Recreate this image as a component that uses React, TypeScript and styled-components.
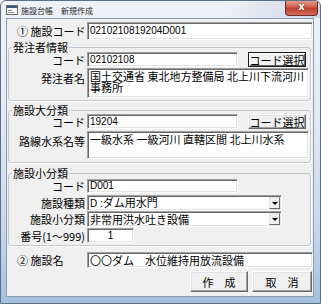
import * as React from "react";
import styled, { createGlobalStyle } from "styled-components";

const font = `"Noto Sans CJK JP", "Noto Sans CJK SC", sans-serif`;
const codeFont = `"Liberation Sans", "Noto Sans CJK JP", sans-serif`;

const GlobalStyle = createGlobalStyle`
  html, body {
    margin: 0;
    padding: 0;
    background: #ffffff;
  }
`;

const Window = styled.div`
  width: 321px;
  height: 304px;
  box-sizing: border-box;
  border: 1px solid #5d7089;
  border-radius: 6px 6px 0 0;
  background: linear-gradient(
    180deg,
    #eef2f7 0%,
    #e4ebf3 35%,
    #c8d8ec 75%,
    #a6bfe0 100%
  );
  display: flex;
  flex-direction: column;
  font-family: ${font};
  font-size: 11px;
  color: #000;
  overflow: hidden;
`;

const TitleBar = styled.div`
  height: 17px;
  display: flex;
  align-items: flex-start;
  padding-left: 5px;
  background: linear-gradient(90deg, transparent 70%, rgba(120, 140, 170, 0.25) 100%);
`;

const TitleIcon = styled.svg`
  margin-top: 4px;
  flex: none;
`;

const TitleText = styled.span`
  font-size: 8px;
  line-height: 9px;
  margin-top: 5px;
  margin-left: 3px;
  color: #1e1e1e;
  white-space: pre;
`;

const CloseButton = styled.div`
  margin-left: auto;
  margin-right: 2px;
  margin-top: -1px;
  width: 33px;
  height: 16px;
  box-sizing: border-box;
  border: 1px solid #6e2c28;
  border-top: none;
  border-radius: 0 0 4px 4px;
  background: linear-gradient(180deg, #e8a898 0%, #d0614f 45%, #c13b2c 55%, #d0705a 100%);
  color: #fff;
  font-family: "DejaVu Sans", sans-serif;
  font-weight: bold;
  font-size: 10px;
  line-height: 14px;
  text-align: center;
  text-shadow: 0 0 2px #5a1a14;
`;

const Client = styled.div`
  flex: 1;
  margin: 0 6px 6px 5px;
  border: 1px solid #8a9bb2;
  background: #f0f0f0;
  display: flex;
  flex-direction: column;
`;

const TopRow = styled.div<{ $mt: number; $h: number }>`
  display: flex;
  align-items: center;
  margin-top: ${p => p.$mt}px;
  height: ${p => p.$h}px;
`;

const TopLabel = styled.span`
  width: 80px;
  box-sizing: border-box;
  padding-left: 10px;
  font-size: 11px;
  line-height: 12px;
  white-space: nowrap;
`;

const Group = styled.fieldset<{ $mt: number; $pb: number }>`
  margin: ${p => p.$mt}px 2px 0 1px;
  padding: 0 0 ${p => p.$pb}px 0;
  border: 1px solid #c4c8ce;
  border-radius: 3px;
  box-shadow: 1px 1px 0 #ffffff;
  min-inline-size: 0;
`;

const Legend = styled.legend`
  margin-left: 3px;
  padding: 0 1px;
  font-size: 11px;
  line-height: 10px;
`;

const FormRow = styled.div<{ $mt: number; $h: number; $top?: boolean }>`
  display: flex;
  align-items: ${p => (p.$top ? "flex-start" : "center")};
  margin-top: ${p => p.$mt}px;
  height: ${p => p.$h}px;
`;

const Label = styled.span<{ $top?: boolean }>`
  width: 78px;
  flex: none;
  box-sizing: border-box;
  padding-right: 2px;
  padding-top: ${p => (p.$top ? 4 : 0)}px;
  text-align: right;
  line-height: 12px;
  white-space: nowrap;
`;

const Field = styled.div<{ $w?: number; $mr?: number; $center?: boolean; $code?: boolean }>`
  box-sizing: border-box;
  height: 100%;
  width: ${p => (p.$w ? `${p.$w}px` : "auto")};
  flex: ${p => (p.$w ? "none" : "1")};
  margin-right: ${p => p.$mr ?? 0}px;
  background: #fff;
  border-style: solid;
  border-width: 1px;
  border-color: #a0a0a0 #ffffff #ffffff #a0a0a0;
  box-shadow: inset 1px 1px 0 #696969, inset -1px -1px 0 #e3e3e3;
  padding: 0 2px;
  display: flex;
  align-items: center;
  justify-content: ${p => (p.$center ? "center" : "flex-start")};
  font-family: ${p => (p.$code ? codeFont : font)};
  font-size: ${p => (p.$code ? 10 : 11)}px;
  line-height: 12px;
  white-space: nowrap;
  overflow: hidden;
`;

const TextBox = styled.div<{ $mr: number }>`
  box-sizing: border-box;
  height: 100%;
  flex: 1;
  margin-right: ${p => p.$mr}px;
  background: #fff;
  border-style: solid;
  border-width: 1px;
  border-color: #a0a0a0 #ffffff #ffffff #a0a0a0;
  box-shadow: inset 1px 1px 0 #696969, inset -1px -1px 0 #e3e3e3;
  padding: 2px 2px 0 2px;
  line-height: 11px;
  overflow: hidden;
`;

const Button = styled.div<{ $w: number; $h: number; $default?: boolean }>`
  box-sizing: border-box;
  width: ${p => p.$w}px;
  height: ${p => p.$h}px;
  flex: none;
  background: #f0f0f0;
  border-style: solid;
  border-width: 1px;
  border-color: ${p =>
    p.$default ? "#1a1a1a" : "#ffffff #696969 #696969 #ffffff"};
  box-shadow: ${p =>
    p.$default
      ? "inset 1px 1px 0 #fff, inset -1px -1px 0 #696969"
      : "inset -1px -1px 0 #a0a0a0, inset 1px 1px 0 #e3e3e3"};
  display: flex;
  align-items: center;
  justify-content: center;
  line-height: 12px;
  white-space: pre;
`;

const Select = styled.div<{ $w: number }>`
  box-sizing: border-box;
  height: 100%;
  width: ${p => p.$w}px;
  flex: none;
  background: #fff;
  border-style: solid;
  border-width: 1px;
  border-color: #a0a0a0 #ffffff #ffffff #a0a0a0;
  box-shadow: inset 1px 1px 0 #696969, inset -1px -1px 0 #e3e3e3;
  padding: 1px 1px 1px 2px;
  display: flex;
  align-items: center;
`;

const SelectText = styled.span`
  flex: 1;
  white-space: nowrap;
  line-height: 12px;
`;

const CodePart = styled.span`
  font-family: ${codeFont};
  font-size: 10px;
`;

const DropButton = styled.span`
  box-sizing: border-box;
  width: 11px;
  height: 100%;
  flex: none;
  background: #f0f0f0;
  border-style: solid;
  border-width: 1px;
  border-color: #e3e3e3 #696969 #696969 #e3e3e3;
  display: flex;
  align-items: center;
  justify-content: center;
  &::after {
    content: "";
    border-left: 3px solid transparent;
    border-right: 3px solid transparent;
    border-top: 3px solid #000;
  }
`;

const ButtonRow = styled.div`
  display: flex;
  justify-content: flex-end;
  gap: 4px;
  margin-top: 3px;
  margin-right: 1px;
`;

export default function App() {
  return (
    <>
      <GlobalStyle />
      <Window>
        <TitleBar>
          <TitleIcon width="12" height="10" viewBox="0 0 12 10">
            <rect x="0.5" y="0.5" width="11" height="9" fill="#fbfbfb" stroke="#6b6b6b" />
            <rect x="1" y="1" width="10" height="2" fill="#3d5a85" />
            <rect x="2" y="5" width="4" height="1" fill="#8a8a8a" />
            <rect x="2" y="7" width="6" height="1" fill="#8a8a8a" />
          </TitleIcon>
          <TitleText>施設台帳　新規作成</TitleText>
          <CloseButton>x</CloseButton>
        </TitleBar>
        <Client>
          <TopRow $mt={3} $h={18}>
            <TopLabel>① 施設コード</TopLabel>
            <Field $code>0210210819204D001</Field>
          </TopRow>

          <Group $mt={2} $pb={2}>
            <Legend>発注者情報</Legend>
            <FormRow $mt={0} $h={15}>
              <Label>コード</Label>
              <Field $w={151} $mr={10} $code>02102108</Field>
              <Button $w={58} $h={15} $default>コード選択</Button>
            </FormRow>
            <FormRow $mt={1} $h={30} $top>
              <Label $top>発注者名</Label>
              <TextBox $mr={1}>国土交通省 東北地方整備局 北上川下流河川事務所</TextBox>
            </FormRow>
          </Group>

          <Group $mt={4} $pb={3}>
            <Legend>施設大分類</Legend>
            <FormRow $mt={-1} $h={15}>
              <Label>コード</Label>
              <Field $w={151} $mr={10} $code>19204</Field>
              <Button $w={58} $h={15}>コード選択</Button>
            </FormRow>
            <FormRow $mt={2} $h={28} $top>
              <Label $top>路線水系名等</Label>
              <TextBox $mr={1}>一級水系 一級河川 直轄区間 北上川水系</TextBox>
            </FormRow>
          </Group>

          <Group $mt={5} $pb={2}>
            <Legend>施設小分類</Legend>
            <FormRow $mt={1} $h={14}>
              <Label>コード</Label>
              <Field $w={151} $code>D001</Field>
            </FormRow>
            <FormRow $mt={2} $h={16}>
              <Label>施設種類</Label>
              <Select $w={195}>
                <SelectText>
                  <CodePart>D :</CodePart>ダム用水門
                </SelectText>
                <DropButton />
              </Select>
            </FormRow>
            <FormRow $mt={0} $h={16}>
              <Label>施設小分類</Label>
              <Select $w={195}>
                <SelectText>非常用洪水吐き設備</SelectText>
                <DropButton />
              </Select>
            </FormRow>
            <FormRow $mt={1} $h={15}>
              <Label>番号(1〜999)</Label>
              <Field $w={47} $center $code>1</Field>
            </FormRow>
          </Group>

          <TopRow $mt={6} $h={16}>
            <TopLabel>② 施設名</TopLabel>
            <Field>〇〇ダム　水位維持用放流設備</Field>
          </TopRow>

          <ButtonRow>
            <Button $w={58} $h={21}>作　成</Button>
            <Button $w={60} $h={21}>取　消</Button>
          </ButtonRow>
        </Client>
      </Window>
    </>
  );
}
